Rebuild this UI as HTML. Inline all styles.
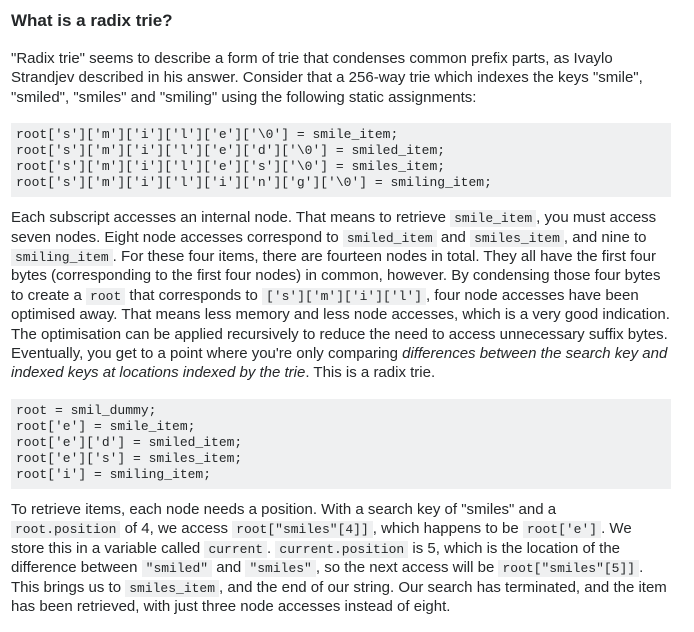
<!DOCTYPE html>
<html><head><meta charset="utf-8"><style>
body{margin:0;background:#fff;color:#242729;font-family:"Liberation Sans",Arial,sans-serif;font-size:15px;line-height:19.4px;}
.w{position:absolute;left:11px;top:0;width:661px;}
h2{font-size:17px;font-weight:bold;margin:10px 0 0;line-height:22px;}
p{margin:0 0 16px;}
pre{background:#eff0f1;margin:0 0 11px;padding:4px 5px 6px 5px;font-family:"Liberation Mono",monospace;font-size:13px;line-height:16px;width:650px;}
code{font-family:"Liberation Mono",monospace;font-size:13px;background:#eff0f1;padding:1px 4px;line-height:1;}
</style></head><body><div class="w">
<h2>What is a radix trie?</h2>
<p style="margin-top:17px">"Radix trie" seems to describe a form of trie that condenses common prefix parts, as Ivaylo Strandjev described in his answer. Consider that a 256-way trie which indexes the keys "smile", "smiled", "smiles" and "smiling" using the following static assignments:</p>
<pre>root['s']['m']['i']['l']['e']['\0'] = smile_item;
root['s']['m']['i']['l']['e']['d']['\0'] = smiled_item;
root['s']['m']['i']['l']['e']['s']['\0'] = smiles_item;
root['s']['m']['i']['l']['i']['n']['g']['\0'] = smiling_item;</pre>
<p>Each subscript accesses an internal node. That means to retrieve <code>smile_item</code>, you must access seven nodes. Eight node accesses correspond to <code>smiled_item</code> and <code>smiles_item</code>, and nine to <code>smiling_item</code>. For these four items, there are fourteen nodes in total. They all have the first four bytes (corresponding to the first four nodes) in common, however. By condensing those four bytes to create a <code>root</code> that corresponds to <code>['s']['m']['i']['l']</code>, four node accesses have been optimised away. That means less memory and less node accesses, which is a very good indication. The optimisation can be applied recursively to reduce the need to access unnecessary suffix bytes. Eventually, you get to a point where you're only comparing <i>differences between the search key and indexed keys at locations indexed by the trie</i>. This is a radix trie.</p>
<pre>root = smil_dummy;
root['e'] = smile_item;
root['e']['d'] = smiled_item;
root['e']['s'] = smiles_item;
root['i'] = smiling_item;</pre>
<p>To retrieve items, each node needs a position. With a search key of "smiles" and a<br><code>root.position</code> of 4, we access <code>root["smiles"[4]]</code>, which happens to be <code>root['e']</code>. We<br>store this in a variable called <code>current</code>. <code>current.position</code> is 5, which is the location of the<br>difference between <code>"smiled"</code> and <code>"smiles"</code>, so the next access will be <code>root["smiles"[5]]</code>.<br>This brings us to <code>smiles_item</code>, and the end of our string. Our search has terminated, and the item<br>has been retrieved, with just three node accesses instead of eight.</p>
</div></body></html>
